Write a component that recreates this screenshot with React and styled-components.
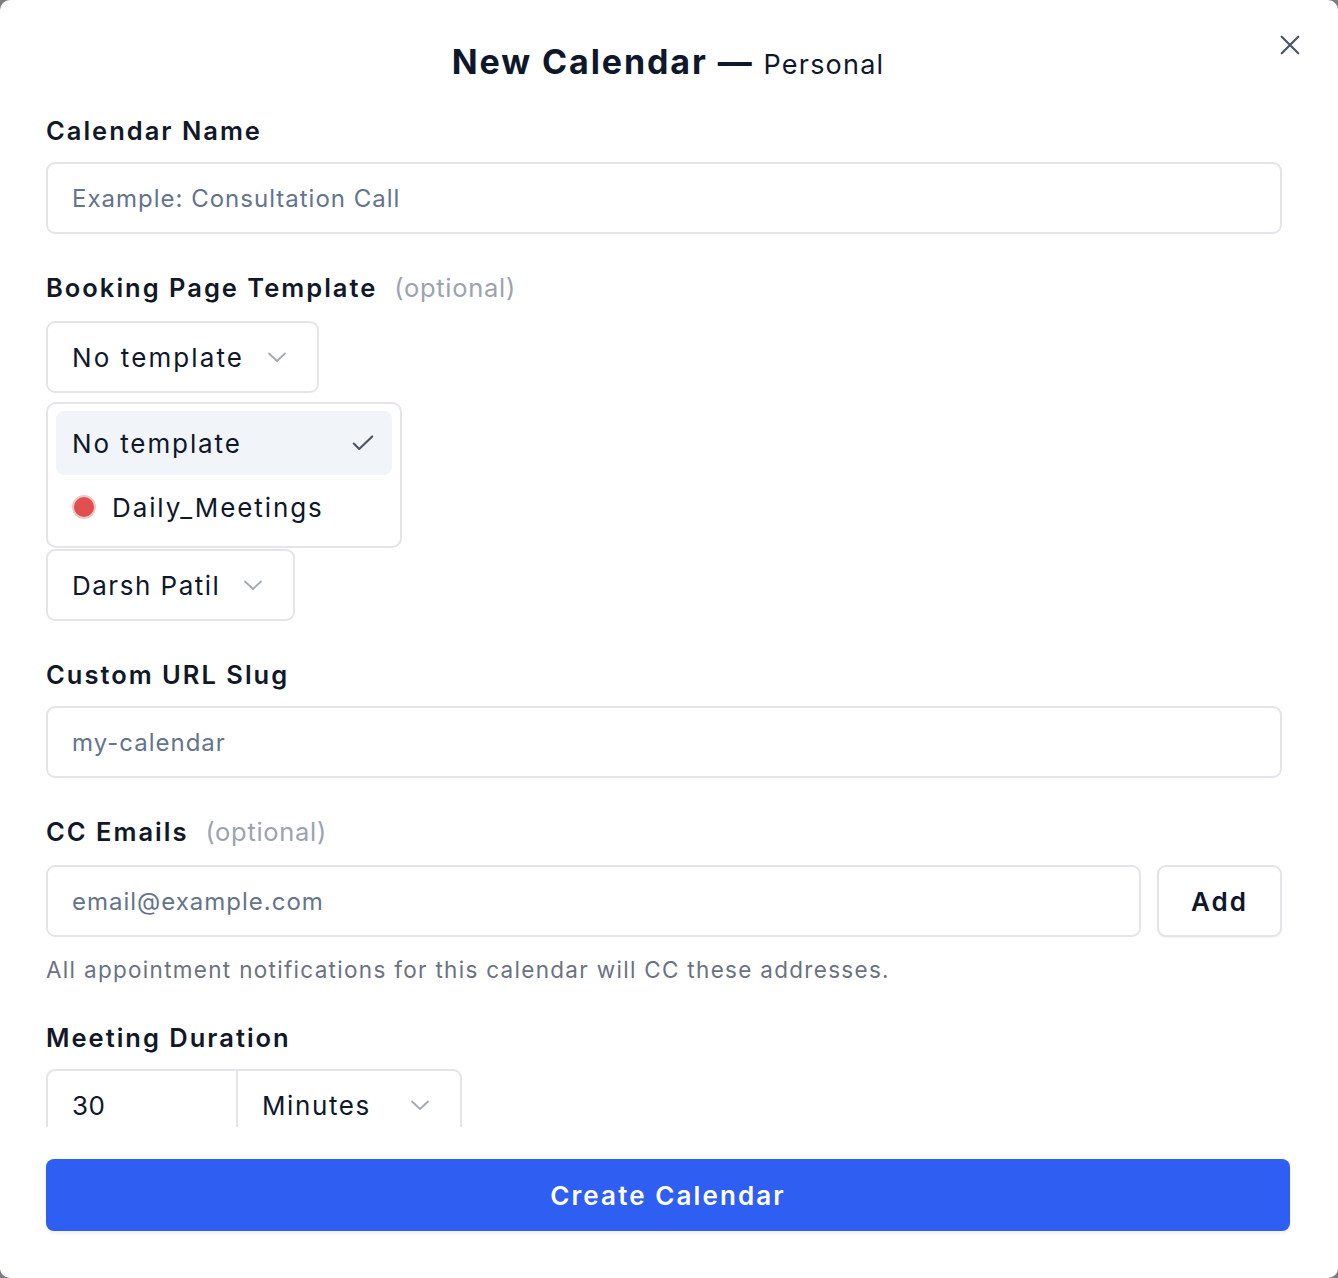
import React from "react";
import styled, { createGlobalStyle } from "styled-components";

const Global = createGlobalStyle`
  html, body { margin: 0; padding: 0; }
  body {
    background: #7b7d83;
    font-family: Inter, "Open Sans", "Noto Sans", sans-serif;
    -webkit-font-smoothing: antialiased;
  }
  * { box-sizing: border-box; }
`;

const Dialog = styled.div`
  width: 1338px;
  height: 1278px;
  background: #ffffff;
  border-radius: 10px;
  display: flex;
  flex-direction: column;
  padding: 40px 48px 47px 46px;
  color: #0f172a;
`;

const Header = styled.header`
  display: grid;
  grid-template-columns: 1fr auto 1fr;
  align-items: center;
  height: 44px;
  margin-bottom: 31px;
`;

const Title = styled.h2`
  grid-column: 2;
  margin: 0;
  font-size: 34px;
  font-weight: 700;
  letter-spacing: 1.9px;
  line-height: 44px;
  white-space: nowrap;
`;

const TitleSub = styled.span`
  font-size: 27px;
  font-weight: 400;
  letter-spacing: 1.2px;
`;

const CloseButton = styled.button`
  grid-column: 3;
  justify-self: end;
  margin-right: -18px;
  margin-top: -38px;
  width: 36px;
  height: 36px;
  border: none;
  background: transparent;
  display: flex;
  align-items: center;
  justify-content: center;
  color: #4b5563;
  padding: 0;
`;

const ScrollArea = styled.div`
  flex: 1;
  overflow: hidden;
  padding-right: 8px;
  display: flex;
  flex-direction: column;
  gap: 38px;
`;

const Field = styled.section`
  display: flex;
  flex-direction: column;
  align-items: flex-start;
  padding-top: ${(p) => p.$offset || 0}px;
`;

const Label = styled.label`
  display: flex;
  align-items: baseline;
  gap: 17px;
  font-size: 25.5px;
  font-weight: 600;
  line-height: 32px;
  letter-spacing: 2px;
  color: #111827;
  margin-bottom: ${(p) => p.$gap || 15}px;
`;

const Optional = styled.span`
  font-weight: 400;
  color: #9ca3af;
  letter-spacing: 0.7px;
`;

const TextInput = styled.div`
  width: 100%;
  height: 72px;
  border: 2px solid #e3e5ea;
  border-radius: 9px;
  display: flex;
  align-items: center;
  padding: 0 24px;
  font-size: 24px;
  letter-spacing: 1px;
  color: #64748b;
  background: #fff;
`;

const SelectWrap = styled.div`
  position: relative;
`;

const SelectButton = styled.div`
  height: 72px;
  border: 2px solid #e3e5ea;
  border-radius: 9px;
  display: inline-flex;
  align-items: center;
  gap: 23px;
  padding: 0 30px 0 24px;
  font-size: 26px;
  letter-spacing: ${(p) => p.$tracking || 1.9}px;
  color: #0f172a;
  background: #fff;
`;

const Menu = styled.div`
  position: absolute;
  top: calc(100% + 9px);
  left: 0;
  width: 356px;
  border: 2px solid #e3e5ea;
  border-radius: 10px;
  background: #fff;
  padding: 7px 8px;
  z-index: 2;
`;

const MenuItem = styled.div`
  height: 64px;
  border-radius: 8px;
  display: flex;
  align-items: center;
  gap: 16px;
  padding: 0 16px;
  font-size: 26px;
  letter-spacing: 1.9px;
  color: #0f172a;
  background: ${(p) => (p.$active ? "#f1f4f9" : "transparent")};
`;

const ItemText = styled.span`
  flex: 1;
`;

const Dot = styled.span`
  width: 24px;
  height: 24px;
  border-radius: 50%;
  background: ${(p) => p.$color};
  border: 2px solid #f3c6c6;
  flex-shrink: 0;
`;

const Row = styled.div`
  width: 100%;
  display: flex;
  gap: 16px;
`;

const AddButton = styled.button`
  width: 125px;
  height: 72px;
  flex-shrink: 0;
  border: 2px solid #e3e5ea;
  border-radius: 9px;
  background: #fff;
  font-family: inherit;
  font-size: 26px;
  font-weight: 600;
  letter-spacing: 2px;
  color: #0f172a;
  box-shadow: 0 1px 2px rgba(15, 23, 42, 0.06);
`;

const Helper = styled.p`
  margin: 19px 0 0;
  font-size: 22.5px;
  line-height: 28px;
  letter-spacing: 1.3px;
  color: #6b7280;
`;

const DurationGroup = styled.div`
  display: flex;
  border: 2px solid #e3e5ea;
  border-radius: 9px;
  height: 72px;
  overflow: hidden;
  flex-shrink: 0;
`;

const NumberCell = styled.div`
  width: 190px;
  display: flex;
  align-items: center;
  padding: 0 24px;
  font-size: 26px;
  letter-spacing: 0.5px;
  color: #0f172a;
  border-right: 2px solid #e3e5ea;
`;

const UnitCell = styled.div`
  width: 222px;
  display: flex;
  align-items: center;
  justify-content: space-between;
  padding: 0 30px 0 24px;
  font-size: 26px;
  letter-spacing: 1.6px;
  color: #0f172a;
`;

const PrimaryButton = styled.button`
  margin-top: 32px;
  height: 72px;
  width: 100%;
  flex-shrink: 0;
  border: none;
  border-radius: 8px;
  background: #2f5ef3;
  color: #fff;
  font-family: inherit;
  font-size: 26px;
  font-weight: 600;
  letter-spacing: 2.1px;
  box-shadow: 0 2px 4px rgba(15, 23, 42, 0.08);
`;

const Chevron = () => (
  <svg width="20" height="12" viewBox="0 0 20 12" fill="none" stroke="#a3a9b4" strokeWidth="1.8" strokeLinecap="round" strokeLinejoin="round">
    <path d="M2 2.5l8 7.5 8-7.5" />
  </svg>
);

const Check = () => (
  <svg width="26" height="26" viewBox="0 0 24 24" fill="none" stroke="#4b5563" strokeWidth="2" strokeLinecap="round" strokeLinejoin="round">
    <path d="M3.5 12.5l5 5L20.5 6" />
  </svg>
);

const CloseIcon = () => (
  <svg width="22" height="22" viewBox="0 0 24 24" fill="none" stroke="currentColor" strokeWidth="2.4" strokeLinecap="round">
    <path d="M3 3l18 18M21 3L3 21" />
  </svg>
);

export default function App() {
  return (
    <>
      <Global />
      <Dialog>
        <Header>
          <Title>
            New Calendar — <TitleSub>Personal</TitleSub>
          </Title>
          <CloseButton aria-label="Close">
            <CloseIcon />
          </CloseButton>
        </Header>

        <ScrollArea>
          <Field>
            <Label>Calendar Name</Label>
            <TextInput>Example: Consultation Call</TextInput>
          </Field>

          <Field>
            <Label $gap={17}>
              Booking Page Template <Optional>(optional)</Optional>
            </Label>
            <SelectWrap>
              <SelectButton $tracking={2.1}>
                No template
                <Chevron />
              </SelectButton>
              <Menu>
                <MenuItem $active>
                  <ItemText>No template</ItemText>
                  <Check />
                </MenuItem>
                <MenuItem>
                  <Dot $color="#e0504f" />
                  <ItemText>Daily_Meetings</ItemText>
                </MenuItem>
              </Menu>
            </SelectWrap>
          </Field>

          <Field $offset={118}>
            <SelectButton $tracking={1.5}>
              Darsh Patil
              <Chevron />
            </SelectButton>
          </Field>

          <Field>
            <Label>Custom URL Slug</Label>
            <TextInput>my-calendar</TextInput>
          </Field>

          <Field>
            <Label $gap={17}>
              CC Emails <Optional>(optional)</Optional>
            </Label>
            <Row>
              <TextInput>email@example.com</TextInput>
              <AddButton>Add</AddButton>
            </Row>
            <Helper>All appointment notifications for this calendar will CC these addresses.</Helper>
          </Field>

          <Field>
            <Label>Meeting Duration</Label>
            <DurationGroup>
              <NumberCell>30</NumberCell>
              <UnitCell>
                Minutes
                <Chevron />
              </UnitCell>
            </DurationGroup>
          </Field>
        </ScrollArea>

        <PrimaryButton>Create Calendar</PrimaryButton>
      </Dialog>
    </>
  );
}
